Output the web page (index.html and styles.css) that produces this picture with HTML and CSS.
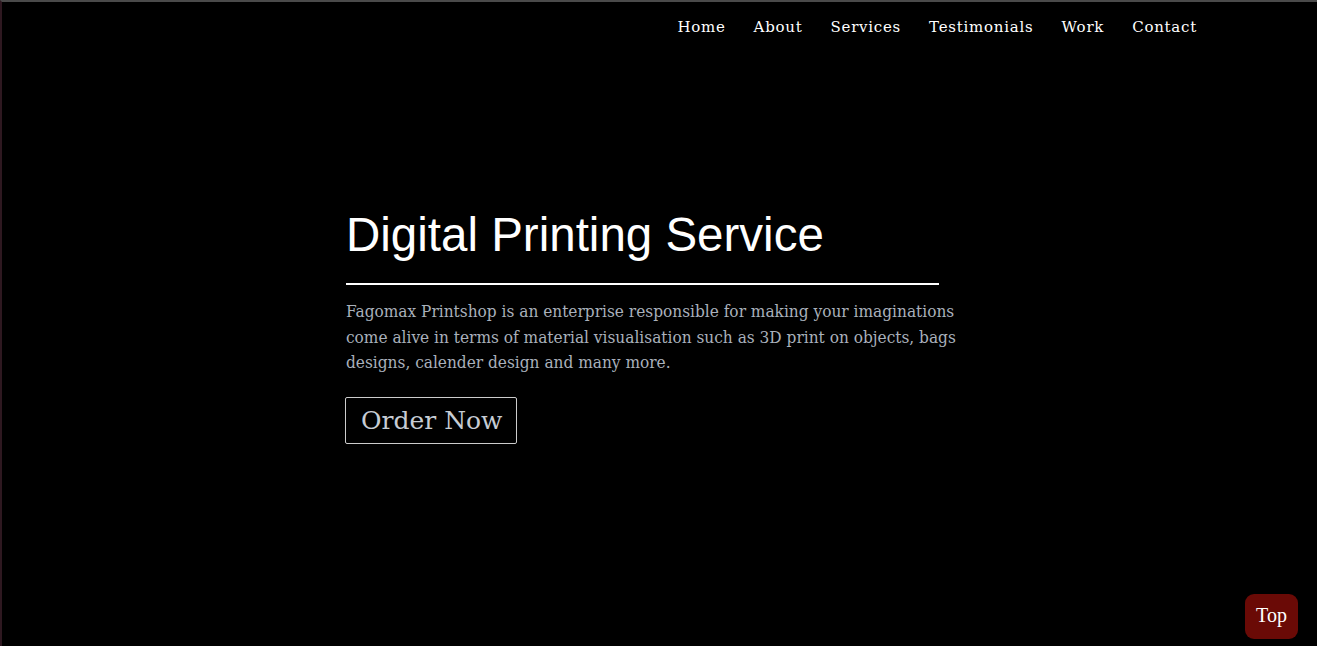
FILE: index.html
```html
<!DOCTYPE html>
<html>
<head>
<meta charset="utf-8">
<link rel="stylesheet" href="styles.css">
</head>
<body>
<div class="page">
  <nav class="nav">
    <a href="#">Home</a>
    <a href="#">About</a>
    <a href="#">Services</a>
    <a href="#">Testimonials</a>
    <a href="#">Work</a>
    <a href="#">Contact</a>
  </nav>
  <section class="hero">
    <h1 class="title">Digital Printing Service</h1>
    <div class="rule"></div>
    <p class="lead">Fagomax Printshop is an enterprise responsible for making your imaginations come alive in terms of material visualisation such as 3D print on objects, bags designs, calender design and many more.</p>
    <a class="order" href="#">Order Now</a>
  </section>
  <a class="top" href="#">Top</a>
</div>
</body>
</html>
```
FILE: styles.css
```css
html, body { margin: 0; padding: 0; background: #000; }
.page {
  border-top: 2px solid #4a4a4a;
  border-left: 2px solid #2e1820;
  box-sizing: border-box;
  height: 646px;
  overflow: hidden;
}
.nav {
  display: flex;
  justify-content: flex-end;
  gap: 28px;
  padding: 16px 120px 0 0;
  font-family: "DejaVu Serif", serif;
  font-size: 15px;
  letter-spacing: 0.75px;
}
.nav a { color: #fff; text-decoration: none; }
.hero {
  margin-left: 344px;
  width: 612px;
  padding-top: 171px;
}
.title {
  margin: 0;
  font-family: "Liberation Sans", Arial, sans-serif;
  font-weight: normal;
  font-size: 47.5px;
  color: #fff;
  line-height: 56px;
}
.rule {
  width: 593px;
  height: 2px;
  background: #fff;
  margin-top: 20px;
}
.lead {
  margin: 14px 0 0;
  font-family: "DejaVu Serif Condensed", "DejaVu Serif", serif;
  font-stretch: 87.5%;
  font-size: 17.1px;
  line-height: 25.5px;
  color: #a9b0bb;
}
.order {
  display: inline-block;
  margin: 21px 0 0 -1px;
  padding: 7px 14px 7px 15px;
  border: 1px solid #ccc;
  border-radius: 2px;
  font-family: "DejaVu Serif", serif;
  font-size: 25px;
  line-height: 31px;
  color: #c6ccd4;
  text-decoration: none;
}
.top {
  position: fixed;
  right: 19px;
  bottom: 7px;
  width: 53px;
  height: 45px;
  padding-bottom: 2px;
  box-sizing: border-box;
  display: flex;
  align-items: center;
  justify-content: center;
  background: #6a0a06;
  border-radius: 9px;
  font-family: "Liberation Serif", serif;
  font-size: 20px;
  color: #fff;
  text-decoration: none;
}
```
